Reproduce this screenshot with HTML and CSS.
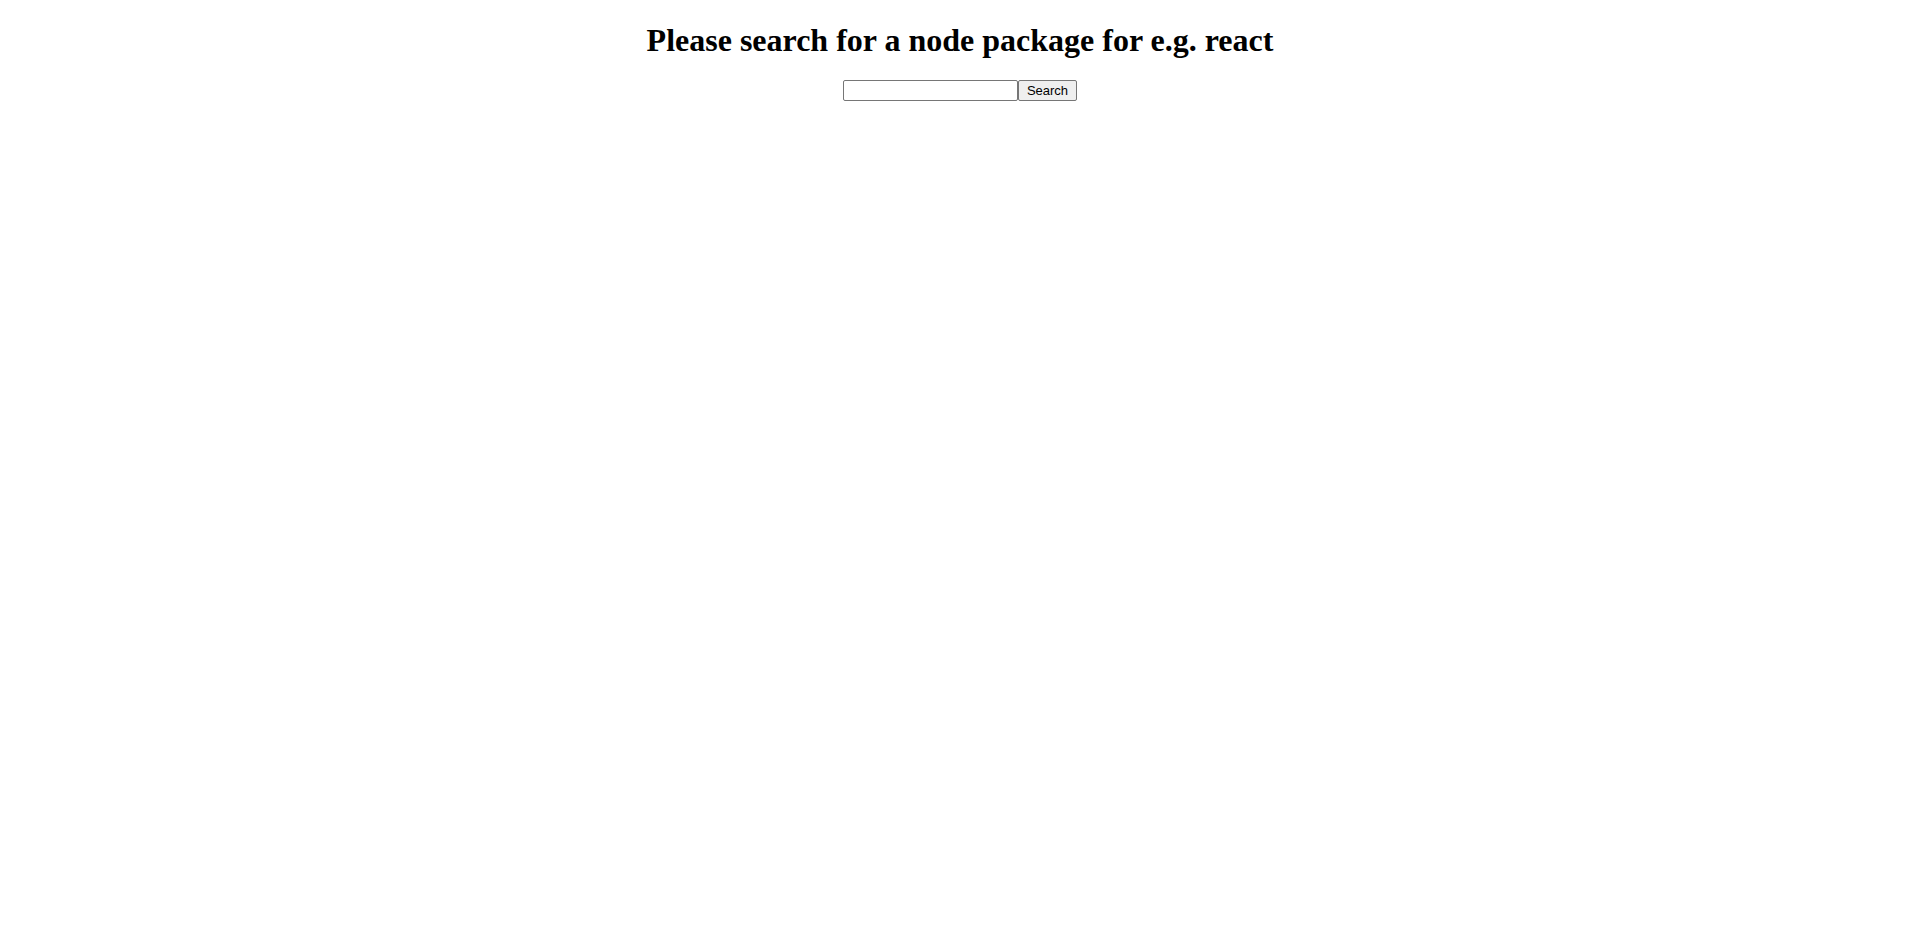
FILE: index.html
```html
<!DOCTYPE html>
<html>
<head>
<meta charset="utf-8">
<link rel="stylesheet" href="styles.css">
</head>
<body>
<div class="app">
  <h1 class="title">Please search for a node package for e.g. react</h1>
  <form class="search">
    <input class="search-input" type="text"><button class="search-btn" type="button">Search</button>
  </form>
</div>
</body>
</html>
```
FILE: styles.css
```css
body {
  margin: 0;
  font-family: "Liberation Serif", serif;
  background: #fff;
  color: #000;
}
.app {
  text-align: center;
}
.title {
  font-size: 32px;
  font-weight: bold;
  margin: 22px 0 21px;
}
.search {
  margin: 0;
}
.search-input {
  box-sizing: border-box;
  width: 175px;
  height: 21px;
  vertical-align: top;
  font-family: "Liberation Sans", Arial, sans-serif;
  font-size: 13px;
  border: 1px solid #767676;
  border-radius: 2px;
}
.search-btn {
  box-sizing: border-box;
  height: 21px;
  width: 59px;
  vertical-align: top;
  font-family: "Liberation Sans", Arial, sans-serif;
  font-size: 13px;
  padding: 1px 6px;
  border: 1px solid #767676;
  border-radius: 2px;
  background: #efefef;
  color: #000;
}
```
